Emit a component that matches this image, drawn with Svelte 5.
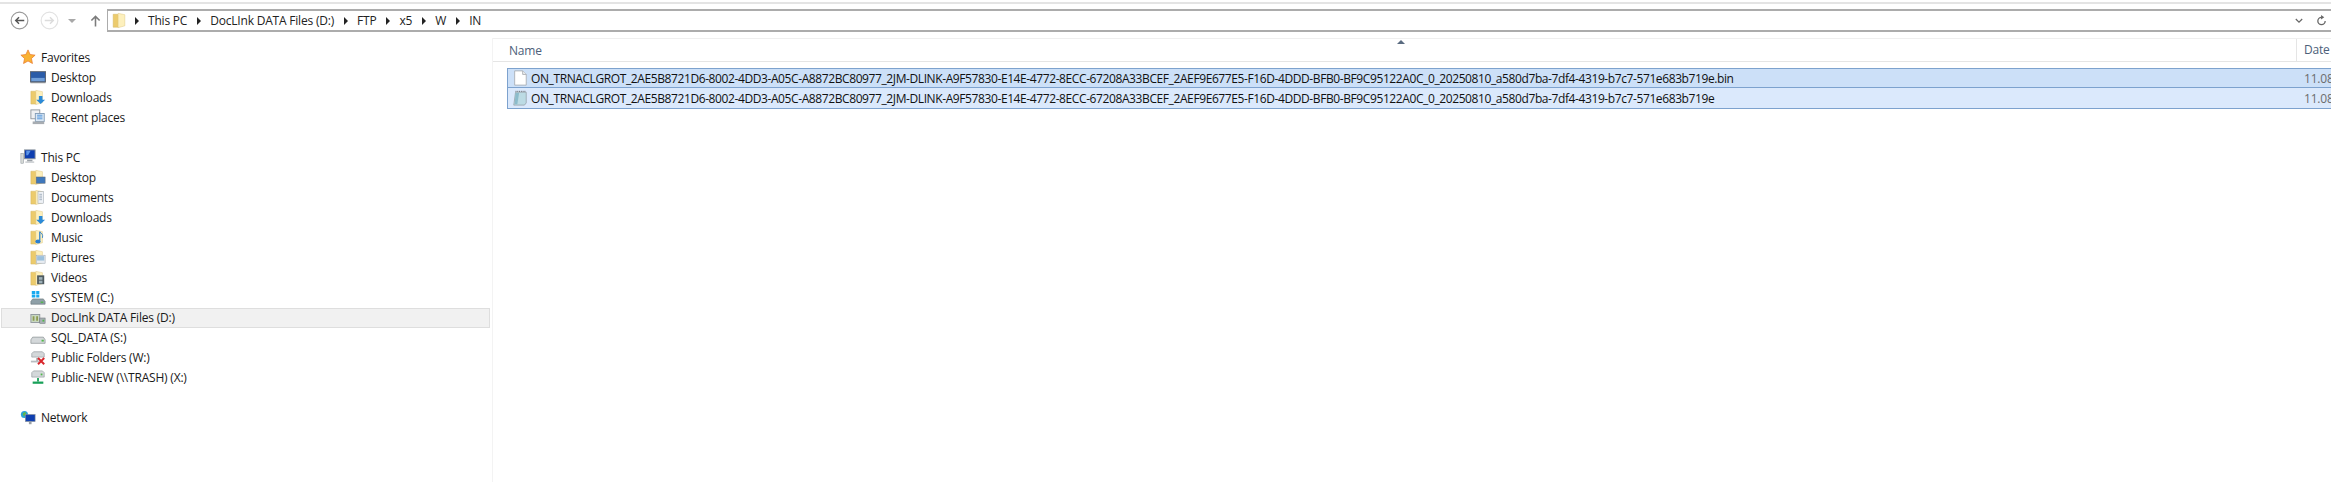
<script lang="ts">
  type Row = { label: string; icon: string; indent?: boolean; active?: boolean };

  const groups: Row[][] = [
    [
      { label: 'Favorites', icon: 'star' },
      { label: 'Desktop', icon: 'screen', indent: true },
      { label: 'Downloads', icon: 'fdown', indent: true },
      { label: 'Recent places', icon: 'recent', indent: true }
    ],
    [
      { label: 'This PC', icon: 'pc' },
      { label: 'Desktop', icon: 'fdesk', indent: true },
      { label: 'Documents', icon: 'fdoc', indent: true },
      { label: 'Downloads', icon: 'fdown', indent: true },
      { label: 'Music', icon: 'fmusic', indent: true },
      { label: 'Pictures', icon: 'fpic', indent: true },
      { label: 'Videos', icon: 'fvid', indent: true },
      { label: 'SYSTEM (C:)', icon: 'sys', indent: true },
      { label: 'DocLInk DATA Files (D:)', icon: 'doclink', indent: true, active: true },
      { label: 'SQL_DATA (S:)', icon: 'disk', indent: true },
      { label: 'Public Folders (W:)', icon: 'netx', indent: true },
      { label: 'Public-NEW (\\\\TRASH) (X:)', icon: 'netok', indent: true }
    ],
    [{ label: 'Network', icon: 'network' }]
  ];

  const crumbs = ['This PC', 'DocLInk DATA Files (D:)', 'FTP', 'x5', 'W', 'IN'];
  const base =
    'ON_TRNACLGROT_2AE5B8721D6-8002-4DD3-A05C-A8872BC80977_2JM-DLINK-A9F57830-E14E-4772-8ECC-67208A33BCEF_2AEF9E677E5-F16D-4DDD-BFB0-BF9C95122A0C_0_20250810_a580d7ba-7df4-4319-b7c7-571e683b719e';
</script>

{#snippet folder()}
  <path d="M1 2.500h5l1 1V17H1z" fill="#eccb6c" stroke="#d2b258" stroke-width=".5" />
  <path d="M6.500 1.500l7.500 1.500v12.500l-7.500 2z" fill="#fdf0bd" stroke="#dcc278" stroke-width=".5" />
{/snippet}

{#snippet icon(name: string)}
  <svg class="ico" viewBox="0 0 18 18" aria-hidden="true">
    {#if name === 'star'}
      <path d="M9 1l2.400 5.200 5.600.7-4.100 3.800 1.100 5.600L9 13.500l-5 2.800 1.100-5.600L1 6.900l5.600-.7z" fill="#f9b233" stroke="#e8762c" stroke-width=".8" />
    {:else if name === 'screen'}
      <rect x=".5" y="3" width="17" height="11.500" fill="#2a5ca8" stroke="#59616c" />
      <rect x="1.500" y="10" width="15" height="3.500" fill="#6f9ed8" />
      <rect x=".5" y="14.500" width="17" height="1.500" fill="#8a8f96" />
    {:else if name === 'recent'}
      <rect x="1" y="1" width="10" height="10" fill="#eef0f2" stroke="#8d9399" />
      <rect x="6" y="5" width="10" height="9" fill="#dbe8f5" stroke="#7f9ab5" />
      <path d="M8 7h6M8 9h6M8 11h6" stroke="#4a90d9" />
      <rect x="3" y="14" width="13" height="3" fill="#a8adb2" />
    {:else if name === 'pc'}
      <rect x="5" y="1" width="12" height="10" fill="#0f3fb0" stroke="#8d949c" />
      <path d="M7 2h5l-3 5H7z" fill="#5a93e8" />
      <rect x="1" y="5" width="3" height="11" fill="#d8dcd8" stroke="#8d949c" stroke-width=".6" />
      <rect x="8" y="12" width="6" height="2" fill="#9aa0a6" />
      <rect x="6" y="14" width="10" height="1.500" fill="#c4c8cc" />
    {:else if name === 'sys'}
      <path d="M1 13l2-3h12l2 3v3H1z" fill="#8fa0a8" stroke="#5d6a70" stroke-width=".6" />
      <rect x="12" y="13" width="3" height="1.500" fill="#50b848" />
      <path d="M2 1h4v3.500H2zM7 1h3.500v3.500H7zM2 5h4v3.500H2zM7 5h3.500v3.500H7z" fill="#17a9f0" />
    {:else if name === 'doclink'}
      <rect x="1" y="5" width="10" height="9" fill="#c8d8c0" stroke="#8d949c" />
      <path d="M3 7h2v5H3zM7 7h2v5H7z" fill="#8c9a50" />
      <rect x="11" y="9" width="6" height="6" fill="#a8b0b4" stroke="#6c7478" stroke-width=".6" />
      <rect x="14" y="11" width="2" height="2" fill="#50b848" />
    {:else if name === 'disk'}
      <path d="M1 11l2-3h12l2 3v4H1z" fill="#d4d8da" stroke="#7d8488" stroke-width=".7" />
      <rect x="13" y="11" width="2.500" height="2" fill="#50b848" />
    {:else if name === 'netx'}
      <path d="M2 4l2-2h10l2 2v4H2z" fill="#d4d8da" stroke="#8d9498" stroke-width=".7" />
      <rect x="7" y="9" width="2" height="4" fill="#a8acb0" />
      <rect x="1" y="12" width="9" height="2" fill="#b8bcc0" />
      <path d="M9 9l7 7M16 9l-7 7" stroke="#d8262c" stroke-width="2.200" />
    {:else if name === 'netok'}
      <path d="M2 3l2-2h10l2 2v5H2z" fill="#d4d8da" stroke="#8d9498" stroke-width=".7" />
      <rect x="12" y="4" width="2" height="2" fill="#50b848" />
      <rect x="8" y="9" width="2" height="4" fill="#18a058" />
      <rect x="3" y="13" width="12" height="2.500" fill="#18a058" />
    {:else if name === 'network'}
      <circle cx="5" cy="5" r="4" fill="#2aa3d8" />
      <path d="M3 4l3-2 1 3-3 2z" fill="#62b846" />
      <rect x="6" y="5" width="11" height="8" fill="#0f3fb0" stroke="#8d949c" stroke-width=".7" />
      <rect x="10" y="13" width="3" height="3" fill="#9aa0a6" />
    {:else}
      {@render folder()}
      {#if name === 'fdown'}
        <path d="M10 8h4v4h3l-5 5-5-5h3z" fill="#2b8ad8" />
      {:else if name === 'fdesk'}
        <rect x="7" y="9" width="10" height="7" fill="#3f78bc" stroke="#5c6670" stroke-width=".6" />
      {:else if name === 'fdoc'}
        <rect x="9" y="3" width="6" height="13" fill="#eef1f5" stroke="#9aa3ad" stroke-width=".6" />
        <path d="M10.500 6h3M10.500 8h3M10.500 10h3M10.500 12h3" stroke="#7d8fa5" stroke-width=".7" />
      {:else if name === 'fmusic'}
        <path d="M11 3v10" stroke="#2b7fd0" stroke-width="1.400" />
        <path d="M11 3c2 2 4 3 3 7" stroke="#2b7fd0" fill="none" />
        <ellipse cx="9" cy="14" rx="3" ry="2.200" fill="#2b7fd0" />
      {:else if name === 'fpic'}
        <rect x="7" y="7" width="10" height="9" fill="#e8edf2" stroke="#9aa3ad" stroke-width=".6" />
        <rect x="8" y="8" width="8" height="5" fill="#9cc0dc" />
      {:else if name === 'fvid'}
        <rect x="8" y="6" width="8" height="10" fill="#4e5a60" />
        <rect x="10" y="8" width="4" height="3" fill="#9db0b8" />
        <rect x="10" y="12" width="4" height="3" fill="#9db0b8" />
      {/if}
    {/if}
  </svg>
{/snippet}

<div class="explorer">
  <div class="topline"></div>

  <div class="toolbar">
    <div class="navbtns">
      <svg class="round" viewBox="0 0 20 20" aria-hidden="true">
        <circle cx="10" cy="10" r="8.800" fill="#fff" stroke="#9a9a9a" stroke-width="1.200" />
        <path d="M15 10H6M9.500 6.500L6 10l3.500 3.500" fill="none" stroke="#555" stroke-width="1.500" />
      </svg>
      <svg class="round fwd" viewBox="0 0 20 20" aria-hidden="true">
        <circle cx="10" cy="10" r="8.800" fill="#fff" stroke="#e2e2e2" stroke-width="1.200" />
        <path d="M5 10h9M10.500 6.500L14 10l-3.500 3.500" fill="none" stroke="#dcdcdc" stroke-width="1.500" />
      </svg>
      <span class="drop"></span>
      <svg class="up" viewBox="0 0 12 14" aria-hidden="true">
        <path d="M6 13V2M1.500 6.500L6 2l4.500 4.500" fill="none" stroke="#7c7c7c" stroke-width="1.700" />
      </svg>
    </div>
    <div class="address">
      <svg class="addr-folder" viewBox="0 0 15 19" aria-hidden="true">{@render folder()}</svg>
      {#each crumbs as crumb}
        <span class="arrow"></span>
        <span class="crumb">{crumb}</span>
      {/each}
      <span class="spacer"></span>
      <svg class="chev" viewBox="0 0 10 7" aria-hidden="true">
        <path d="M1 1l4 4 4-4" fill="none" stroke="#666" stroke-width="1.500" />
      </svg>
      <svg class="refresh" viewBox="0 0 12 12" aria-hidden="true">
        <path d="M10 6.500A4 4 0 1 1 6 2.500" fill="none" stroke="#666" stroke-width="1.400" />
        <path d="M5.500 0l3.500 2.500L5.500 5z" fill="#666" />
      </svg>
    </div>
  </div>

  <div class="body">
    <nav class="sidebar">
      {#each groups as group}
        <ul>
          {#each group as row}
            <li class:indent={row.indent} class:active={row.active}>
              {@render icon(row.icon)}
              <span>{row.label}</span>
            </li>
          {/each}
        </ul>
      {/each}
    </nav>

    <main class="files">
      <div class="header">
        <span class="sort"></span>
        <span class="col-name">Name</span>
        <span class="col-date">Date</span>
      </div>
      <div class="list">
        <div class="file sel">
          <svg class="ico" viewBox="0 0 18 18" aria-hidden="true">
            <path d="M3 1h9l4 4v12H3z" fill="#fff" stroke="#a9aeb3" />
            <path d="M12 1v4h4" fill="#eef0f2" stroke="#a9aeb3" />
          </svg>
          <span class="fname">{base}.bin</span>
          <span class="fdate">11.08</span>
        </div>
        <div class="file sel second">
          <svg class="ico" viewBox="0 0 18 18" aria-hidden="true">
            <path d="M4 2.500h12v12l-2 2.500H2z" fill="#bcdbe4" stroke="#8f9ba0" stroke-width=".8" />
            <path d="M4 3.500h4L6 16H3z" fill="#8cbccb" />
            <path d="M4 1.500h12" stroke="#555" stroke-dasharray="1 1" />
          </svg>
          <span class="fname">{base}</span>
          <span class="fdate">11.08</span>
        </div>
      </div>
    </main>
  </div>
</div>

<style>
  :global(body) {
    margin: 0;
    background: #fff;
  }

  .explorer {
    width: 2331px;
    height: 482px;
    overflow: hidden;
    display: flex;
    flex-direction: column;
    font-family: 'Open Sans', 'Noto Sans', sans-serif;
    font-size: 12px;
    letter-spacing: -0.2px;
    color: #1a1a1a;
    background: #fff;
  }

  .topline {
    height: 2px;
    margin-top: 2px;
    background: #e4e4e4;
  }

  .toolbar {
    display: flex;
    align-items: center;
    height: 23px;
    margin-top: 5px;
  }

  .navbtns {
    width: 107px;
    flex: none;
    display: flex;
    align-items: center;
    padding-left: 10px;
    box-sizing: border-box;
  }
  .round {
    width: 19px;
    height: 19px;
  }
  .fwd {
    margin-left: 11px;
  }
  .drop {
    width: 0;
    height: 0;
    border: 4px solid transparent;
    border-top: 4px solid #a8a8a8;
    border-bottom: 0;
    margin-left: 9px;
  }
  .up {
    width: 11px;
    height: 14px;
    margin-left: 14px;
  }

  .address {
    flex: 1;
    display: flex;
    align-items: center;
    height: 23px;
    box-sizing: border-box;
    border: 1px solid #acacac;
    border-top-width: 2px;
    border-bottom-width: 2px;
    border-right: 0;
    padding-left: 4px;
    color: #222;
  }
  .addr-folder {
    width: 14px;
    height: 17px;
    margin-right: 9px;
  }
  .arrow {
    width: 0;
    height: 0;
    border-left: 4px solid #222;
    border-top: 4px solid transparent;
    border-bottom: 4px solid transparent;
    margin-right: 9px;
  }
  .crumb {
    margin-right: 10px;
  }
  .spacer {
    flex: 1;
  }
  .chev {
    width: 8px;
    height: 6px;
    margin-right: 13px;
  }
  .refresh {
    width: 11px;
    height: 11px;
    margin-right: 4px;
  }

  .body {
    display: flex;
    flex: 1;
    min-height: 0;
  }

  .sidebar {
    width: 493px;
    flex: none;
    padding-top: 9px;
    box-sizing: border-box;
    margin-top: 6px;
    border-right: 1px solid #f3f3f3;
  }
  ul {
    list-style: none;
    margin: 0 0 20.05px;
    padding: 0;
  }
  li {
    display: flex;
    align-items: center;
    height: 20.05px;
    padding-left: 20px;
    gap: 5px;
    box-sizing: border-box;
  }
  li.indent {
    padding-left: 30px;
  }
  li.active {
    background: #f1f1f1;
    box-shadow: inset 0 0 0 1px #dedede;
    margin-left: 1px;
    margin-right: 2px;
    padding-left: 29px;
  }
  .ico {
    width: 16px;
    height: 16px;
    flex: none;
  }

  .files {
    flex: 1;
    min-width: 0;
    padding-top: 6px;
  }

  .header {
    position: relative;
    display: flex;
    align-items: center;
    height: 24px;
    border-top: 1px solid #efefef;
    border-bottom: 1px solid #e5e5e5;
    color: #4c607a;
    box-sizing: border-box;
    padding-left: 16px;
  }
  .sort {
    position: absolute;
    left: 904px;
    top: 1px;
    border: 4px solid transparent;
    border-bottom: 4px solid #5a6b80;
    border-top: 0;
    width: 0;
    height: 0;
  }
  .col-name {
    flex: 1;
  }
  .col-date {
    width: 27px;
    overflow: hidden;
    height: 100%;
    line-height: 22px;
    border-left: 1px solid #e5e5e5;
    padding-left: 7px;
  }

  .list {
    margin-top: 6px;
    margin-left: 14px;
  }
  .file {
    display: flex;
    align-items: center;
    height: 20px;
    box-sizing: border-box;
    border: 1px solid #7da2ce;
    border-right: 0;
    background: #cce0f8;
    padding-left: 4px;
    gap: 3px;
  }
  .second {
    background: #dbe9fc;
    border-top: 0;
    height: 21px;
  }
  .fname {
    flex: 1;
    min-width: 0;
    white-space: nowrap;
    letter-spacing: -0.4px;
    color: #111;
  }
  .fdate {
    width: 27px;
    overflow: hidden;
    white-space: nowrap;
    color: #6d6d6d;
    flex: none;
  }
</style>
